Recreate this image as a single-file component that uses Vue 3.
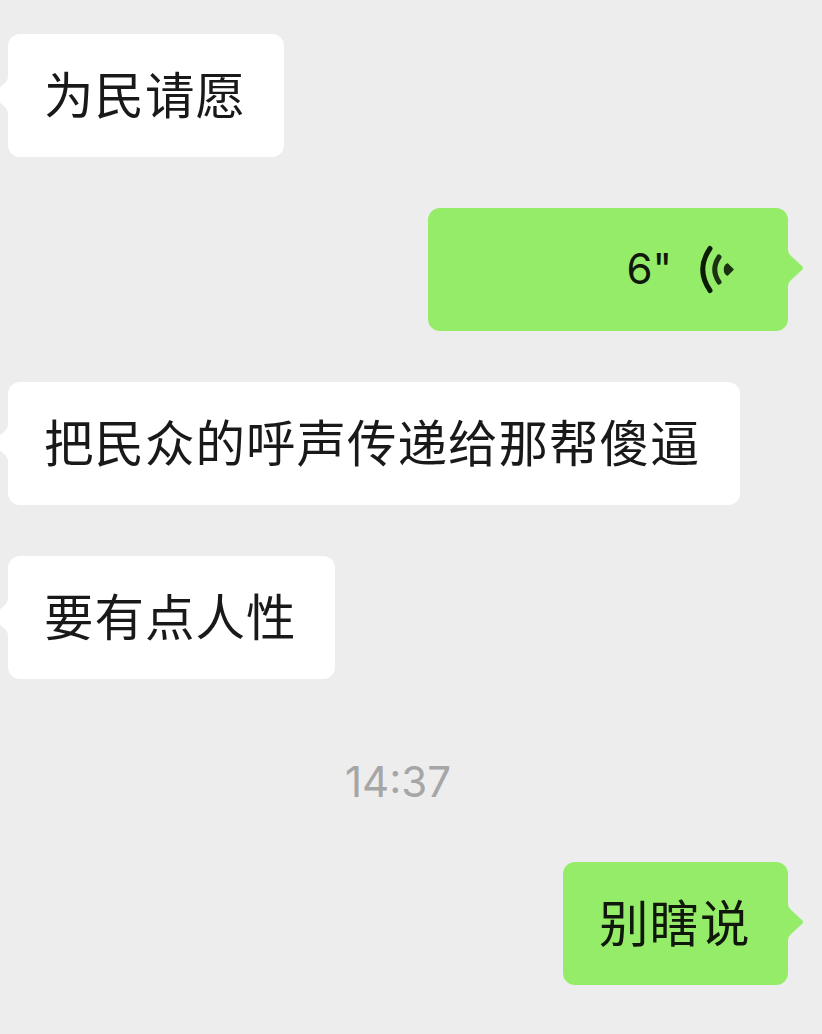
<script setup>
const messages = [
  { id: 1, side: 'left', text: '为民请愿', size: 'w4' },
  { id: 2, side: 'right', voice: '6"', size: 'voice' },
  { id: 3, side: 'left', text: '把民众的呼声传递给那帮傻逼', size: 'w13' },
  { id: 4, side: 'left', text: '要有点人性', size: 'w5' },
  { id: 5, time: '14:37' },
  { id: 6, side: 'right', text: '别瞎说', size: 'w3' }
]
</script>

<template>
  <main class="chat">
    <template v-for="m in messages" :key="m.id">
      <time v-if="m.time" class="time">{{ m.time }}</time>
      <div v-else class="bubble" :class="[m.side, m.size]">
        <span v-if="m.text" class="text">{{ m.text }}</span>
        <template v-else>
          <span class="duration">{{ m.voice }}</span>
          <svg class="wave" viewBox="0 0 40 50" width="40" height="50">
            <path d="M13 4.500Q-1.500 25.500 13 46.500" />
            <path class="inner" d="M22 13Q13.500 25.500 22 38" />
            <path class="dot" d="M30.500 20L36 25.500L30.500 31Q27.500 29.500 27.500 25.500Q27.500 21.500 30.500 20Z" />
          </svg>
        </template>
        <svg class="tail" viewBox="0 0 16 40" width="16" height="40">
          <path d="M0 2Q0 5 3 8L14 18Q16 20 14 22L3 32Q0 35 0 38Z" />
        </svg>
      </div>
    </template>
  </main>
</template>

<style>
body { margin: 0; background: #ededed; }
</style>

<style scoped>
.chat {
  box-sizing: border-box;
  width: 822px;
  height: 1034px;
  padding: 34px 34px 0 8px;
  display: flex;
  flex-direction: column;
  align-items: flex-start;
  gap: 51px;
  overflow: hidden;
  background: #ededed;
  font-family: Inter, "Noto Sans CJK SC", sans-serif;
  color: #191919;
}
.bubble {
  position: relative;
  box-sizing: border-box;
  height: 123px;
  flex: none;
  display: flex;
  align-items: center;
  padding: 0 36px 5px;
  border-radius: 12px;
  background: #fff;
}
.right { align-self: flex-end; background: #95ec69; color: #0f180b; }
.w4 { width: 276px; }
.w13 { width: 732px; }
.w5 { width: 327px; }
.w3 { width: 225px; }
.voice { width: 360px; justify-content: flex-end; padding: 0 51px 1px 0; }
.text {
  font: 49.500px/72px "Noto Sans CJK SC", sans-serif;
  letter-spacing: 1px;
  white-space: nowrap;
}
.duration { font-size: 42px; line-height: 60px; margin-right: 25px; }
.wave { fill: none; stroke: #0b1c05; stroke-width: 5; stroke-linecap: round; }
.wave .inner { stroke: #1c3211; }
.wave .dot { fill: #1c3211; stroke: #1c3211; stroke-width: 1.5; stroke-linejoin: round; }
.tail { position: absolute; top: 40px; fill: #fff; }
.left .tail { right: 100%; top: 41px; transform: scaleX(-1); }
.right .tail { left: 100%; fill: #95ec69; }
.time {
  align-self: center;
  height: 81px;
  line-height: 103px;
  font-size: 42px;
  color: #a6a6a6;
}
</style>
